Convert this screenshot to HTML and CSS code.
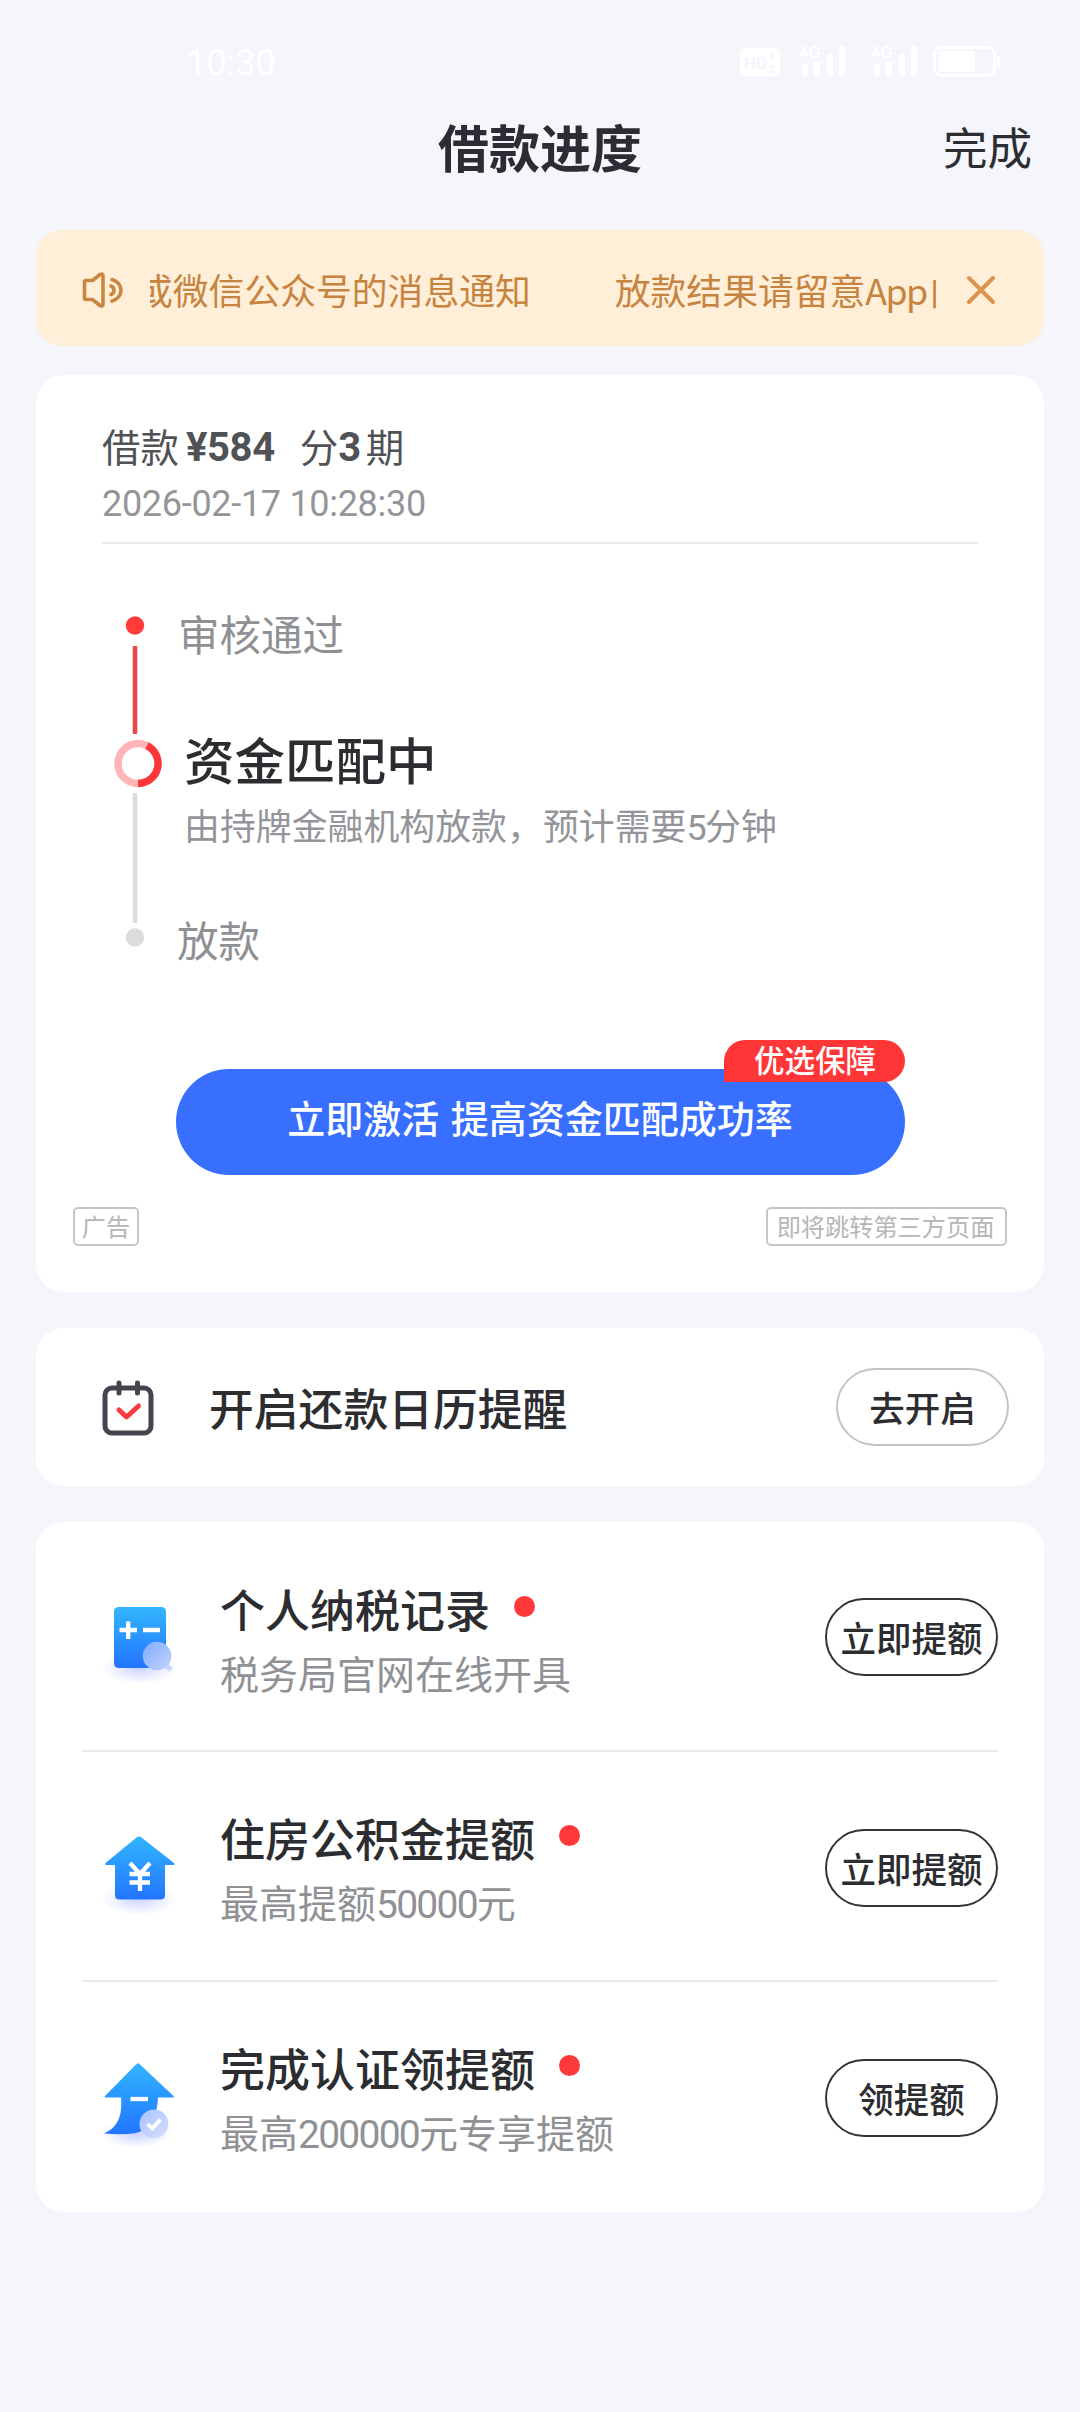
FILE: index.html
```html
<!DOCTYPE html>
<html lang="zh-CN">
<head>
<meta charset="utf-8">
<title>借款进度</title>
<link rel="stylesheet" href="styles.css">
</head>
<body>
<header class="status">
  <span class="clock">10:30</span>
  <svg class="indicators" width="262" height="40" viewBox="0 0 262 40" fill="#fff">
    <rect x="1" y="8" width="40" height="28" rx="5"/>
    <text x="5" y="29" class="hd">HD</text>
    <text x="30" y="20" class="hd-sub">1</text>
    <text x="30" y="33" class="hd-sub">2</text>
    <g id="signal">
      <text x="60" y="18" class="net">4G</text>
      <rect x="63" y="24" width="6" height="12" rx="1.5"/>
      <rect x="75" y="21" width="6" height="15" rx="1.5"/>
      <rect x="88" y="14" width="6" height="22" rx="1.5"/>
      <rect x="100" y="6" width="6" height="30" rx="1.5"/>
    </g>
    <use href="#signal" x="72"/>
    <rect x="195.500" y="7.500" width="60" height="28" rx="7" fill="none" stroke="#fff" stroke-width="3"/>
    <rect x="200" y="11" width="36" height="21" rx="3"/>
    <rect x="258" y="16" width="3" height="11" rx="1.500"/>
  </svg>
</header>

<nav class="nav">
  <h1 class="nav-title">借款进度</h1>
  <a class="nav-done">完成</a>
</nav>

<section class="notice">
  <svg class="speaker" width="44" height="36" viewBox="0 0 44 36" fill="none" stroke="#c98641" stroke-width="3.600" stroke-linejoin="round" stroke-linecap="round">
    <path d="M4.500 10q0-1.500 1.500-1.500h6.500l7.500-6q3-1.500 3 1.500v28q0 3-3 1.500l-7.500-6H6q-1.500 0-1.500-1.500z"/>
    <path d="M32 7.500c12 3.500 12 18 0 21.500"/>
    <path d="M31 14c4 1.500 4 7 0 8.500"/>
  </svg>
  <div class="marquee"><span>或微信公众号的消息通知</span><span>放款结果请留意<span class="app">App</span>内</span></div>
  <svg class="close" width="30" height="30" viewBox="0 0 30 30" fill="none" stroke="#dc9550" stroke-width="4" stroke-linecap="round"><path d="M3 3l24 24M27 3L3 27"/></svg>
</section>

<main>
  <section class="card loan">
    <div class="loan-head">
      <div class="loan-amount">借款<b class="money">¥584</b><span class="part">分</span><b class="terms">3</b>期</div>
      <div class="loan-time">2026-02-17 10:28:30</div>
    </div>
    <div class="progress">
      <svg class="rail" width="48" height="332" viewBox="0 0 48 332">
        <circle cx="21" cy="9.500" r="9.200" fill="#ff3a38"/>
        <rect x="18.700" y="30" width="4.600" height="88" rx="1" fill="#e8484b"/>
        <circle cx="24" cy="147.500" r="20" fill="none" stroke="#ffb5b8" stroke-width="7.400"/>
        <path d="M33 129.600a20 20 0 0 1-9 37.900" fill="none" stroke="#fb373c" stroke-width="7.400"/>
        <rect x="18.700" y="177" width="4.600" height="130" rx="1" fill="#dcdcdc"/>
        <circle cx="21" cy="321.500" r="9.200" fill="#dcdcdc"/>
      </svg>
      <div class="steps">
        <p class="step first">审核通过</p>
        <p class="step current">资金匹配中</p>
        <p class="step-note">由持牌金融机构放款，预计需要<span class="num">5</span>分钟</p>
        <p class="step last">放款</p>
      </div>
    </div>
    <a class="activate">立即激活 提高资金匹配成功率<span class="badge">优选保障</span></a>
    <div class="tags"><span class="tag">广告</span><span class="tag wide">即将跳转第三方页面</span></div>
  </section>

  <section class="card remind">
    <svg class="calendar" width="52" height="56" viewBox="0 0 52 56" fill="none" stroke-linecap="round" stroke-linejoin="round">
      <rect x="3" y="8" width="46" height="45" rx="7" stroke="#45454f" stroke-width="5"/>
      <path d="M17 3v10M35.500 3v10" stroke="#45454f" stroke-width="5"/>
      <path d="M17 30l7.500 7 12-11" stroke="#fa3a41" stroke-width="5"/>
    </svg>
    <span class="remind-title">开启还款日历提醒</span>
    <a class="pill light">去开启</a>
  </section>

  <section class="card offers">
    <article class="offer">
      <svg class="offer-icon" width="100" height="100" viewBox="0 0 100 100">
        <defs>
          <linearGradient id="blue" x1="0" y1="0" x2="0" y2="1"><stop offset="0" stop-color="#31b6ff"/><stop offset="1" stop-color="#2374ff"/></linearGradient>
          <linearGradient id="lens" x1="0" y1="0" x2="1" y2="1"><stop offset="0" stop-color="#7eadff"/><stop offset="1" stop-color="#c5d2ff"/></linearGradient>
          <radialGradient id="glow"><stop offset="0" stop-color="#4a6cff" stop-opacity=".3"/><stop offset="1" stop-color="#6a80ff" stop-opacity="0"/></radialGradient>
        </defs>
        <ellipse cx="49" cy="80" rx="38" ry="16" fill="url(#glow)"/>
        <rect x="24" y="19" width="52" height="61" rx="4.500" fill="url(#blue)"/>
        <path d="M29.500 42h17.500M38.200 33.500v17.500M53 42h17" stroke="#fff" stroke-width="4.300"/>
        <path d="M75 76l6 6" stroke="#c9d5ff" stroke-width="5"/>
        <circle cx="67" cy="68" r="14.300" fill="url(#lens)"/>
      </svg>
      <div class="offer-text"><h2>个人纳税记录<i class="dot"></i></h2><p>税务局官网在线开具</p></div>
      <a class="pill">立即提额</a>
    </article>
    <article class="offer">
      <svg class="offer-icon" width="100" height="100" viewBox="0 0 100 100">
        <ellipse cx="49" cy="80" rx="38" ry="16" fill="url(#glow)"/>
        <path d="M46.500 18.500q2.500-2 5 0L84 44q1 2-1 2h-8v30q0 4.500-4.500 4.500h-41q-4.500 0-4.500-4.500V46h-8.500q-2 0-1-2z" fill="url(#blue)"/>
        <path d="M40 44l10 11 10-11M39.500 55h20.500M39.500 63.500h20.500M50 54v18" fill="none" stroke="#fff" stroke-width="4.300"/>
      </svg>
      <div class="offer-text"><h2>住房公积金提额<i class="dot"></i></h2><p>最高提额<span class="num">50000</span>元</p></div>
      <a class="pill">立即提额</a>
    </article>
    <article class="offer">
      <svg class="offer-icon" width="100" height="100" viewBox="0 0 100 100">
        <defs><linearGradient id="seal" x1="0" y1="0" x2="1" y2="1"><stop offset="0" stop-color="#a9c2ff"/><stop offset="1" stop-color="#d8e0ff"/></linearGradient></defs>
        <ellipse cx="46" cy="84" rx="36" ry="14" fill="url(#glow)"/>
        <path d="M46.500 14q1.500-1.300 3 0L83.500 46q1 1.600-1 1.600H68c-.5 10-3 36.400-30 36.400q-13 .5-24-.5c14-6 18.500-18 17-36H16q-2 0-1-1.600z" fill="url(#blue)"/>
        <path d="M40.500 49h17.500" stroke="#fff" stroke-width="4.300"/>
        <circle cx="64" cy="74" r="14.500" fill="url(#seal)"/>
        <path d="M57.500 74l5 4.500 8-9" fill="none" stroke="#fff" stroke-width="3.600"/>
      </svg>
      <div class="offer-text"><h2>完成认证领提额<i class="dot"></i></h2><p>最高<span class="num">200000</span>元专享提额</p></div>
      <a class="pill">领提额</a>
    </article>
  </section>
</main>
</body>
</html>
```
FILE: styles.css
```css
* { box-sizing: border-box; }

body {
  margin: 0;
  min-height: 2412px;
  background: #f4f6fb;
  color: #2c2d30;
  font-family: "Noto Sans CJK SC", "Noto Sans", sans-serif;
}

h1, h2, p { margin: 0; font-weight: 500; white-space: nowrap; }

/* status bar */
.status {
  display: flex;
  justify-content: space-between;
  align-items: center;
  height: 121px;
  padding: 0 79px 0 186px;
}
.clock { margin-top: 4px; color: #fff; font: 400 36px/40px Roboto, sans-serif; }
.indicators { display: block; margin-top: -1px; }
.hd { fill: #f4f6fb; font: 700 17px Roboto, sans-serif; }
.hd-sub { fill: #f4f6fb; font: 700 11px Roboto, sans-serif; }
.net { font: 500 17px Roboto, sans-serif; }

/* title bar */
.nav {
  display: grid;
  grid-template-columns: 1fr auto 1fr;
  align-items: center;
  height: 50px;
  padding: 0 48px;
}
.nav-title {
  grid-column: 2;
  font-size: 51px;
  font-weight: 700;
  line-height: 50px;
  color: #2c2c34;
}
.nav-done { justify-self: end; font-size: 44.500px; line-height: 50px; }

/* scrolling notice */
.notice {
  display: flex;
  align-items: center;
  height: 116px;
  margin: 59px 36px 0;
  padding: 3px 48px 0 44px;
  border-radius: 26px;
  background: #ffefd8;
  color: #c68440;
}
.marquee {
  display: flex;
  gap: 84px;
  width: 786px;
  margin-left: 26px;
  overflow: hidden;
  font-size: 35.8px;
  line-height: 53px;
  white-space: nowrap;
}
.marquee > span:first-child { margin-left: -13px; }
.app { margin-right: 3px; letter-spacing: -1.6px; }
.close { margin: 1px 0 0 30px; }

main {
  display: flex;
  flex-direction: column;
  gap: 36px;
  margin: 29px 36px 0;
}
.card { border-radius: 28px; background: #fff; }

/* loan progress */
.loan { height: 917px; padding-top: 46px; }
.loan-head {
  margin: 0 66px;
  padding-bottom: 18px;
  border-bottom: 2px solid #ebebeb;
}
.loan-amount {
  display: flex;
  height: 48px;
  font-size: 38.5px;
  line-height: 48px;
  color: #515255;
}
.loan-amount b { font: 700 40px/53px Roboto, sans-serif; letter-spacing: -.4px; }
.money { margin-left: 7px; }
.part { margin-left: 25px; }
.terms { margin-right: 5px; }
.loan-time {
  margin-top: 14px;
  height: 41px;
  font: 400 36px/42px Roboto, sans-serif;
  letter-spacing: -.3px;
  color: #949599;
}
.progress {
  display: flex;
  gap: 15px;
  padding: 65px 0 0 78px;
}
.rail { flex: none; margin-top: 7px; }
.step { font-size: 41.5px; line-height: 48px; font-weight: 400; color: #8f9094; }
.first { padding-left: 1px; }
.current {
  margin-top: 71px;
  padding-left: 7px;
  font-size: 50.5px;
  line-height: 60px;
  font-weight: 500;
  color: #2c2d30;
}
.step-note {
  margin-top: 14px;
  padding-left: 7px;
  font-size: 35.9px;
  line-height: 44px;
  font-weight: 400;
  color: #94959a;
}
.last { margin-top: 65px; }
.num { font-family: Roboto, sans-serif; font-weight: 400; letter-spacing: -.045em; }

.activate {
  position: relative;
  display: block;
  width: 729px;
  height: 106px;
  margin: 106px auto 0;
  border-radius: 53px;
  background: #386fff;
  color: #fff;
  font-size: 38px;
  font-weight: 500;
  line-height: 96px;
  text-align: center;
  word-spacing: 3px;
}
.badge {
  position: absolute;
  top: -29px;
  right: 0;
  width: 181px;
  height: 42px;
  padding-left: 2px;
  border-radius: 21px 21px 21px 0;
  background: #ff3637;
  font-size: 30.500px;
  line-height: 39px;
}
.tags {
  display: flex;
  justify-content: space-between;
  margin: 32px 37px 0;
}
.tag {
  width: 66px;
  height: 39px;
  border: 2px solid #c6c6c6;
  border-radius: 5px;
  color: #b6b6b6;
  font-size: 24.200px;
  line-height: 34px;
  text-align: center;
}
.wide { width: 241px; padding-right: 2px; }

/* repayment reminder */
.remind {
  display: flex;
  align-items: center;
  height: 158px;
  padding: 0 35px 0 66px;
}
.remind-title { flex: 1; margin-left: 55px; font-size: 44.800px; font-weight: 500; line-height: 60px; }
.calendar { margin-top: 2px; }
.pill {
  flex: none;
  width: 173px;
  height: 78px;
  border: 2px solid #333437;
  border-radius: 39px;
  font-size: 35.500px;
  font-weight: 500;
  line-height: 74px;
  text-align: center;
}
.light { border-color: #c4c4c6; }

/* credit line offers */
.offers { height: 690px; padding: 0 46px; }
.offer {
  display: flex;
  align-items: center;
  height: 230px;
  padding-top: 3px;
  border-bottom: 2px solid #ebebeb;
}
.offer:first-child { padding-top: 1px; }
.offer:last-child { height: 231px; border-color: transparent; }
.offer-icon { flex: none; margin: 3px 0 0 8px; }
.offer-text { flex: 1; margin: 4px 0 0 30px; }
.offer-text h2 { display: flex; align-items: center; font-size: 45px; line-height: 60px; }
.dot { width: 21px; height: 21px; margin: -5px 0 0 24px; border-radius: 50%; background: #ff3939; }
.offer-text p { margin-top: 6px; font-size: 39px; line-height: 54px; color: #909195; font-weight: 400; }
```
